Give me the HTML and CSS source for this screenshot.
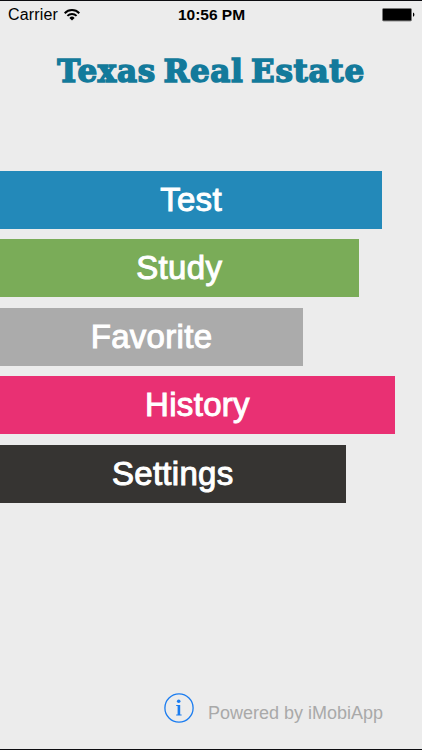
FILE: index.html
```html
<!DOCTYPE html>
<html lang="en">
<head>
    <meta charset="UTF-8">
    <meta name="viewport" content="width=device-width, initial-scale=1.0">
    <title>Texas Real Estate</title>
    <link rel="stylesheet" href="styles.css">
</head>
<body>
    <div class="screen">
        <div class="status-bar">
            <div class="carrier">
                <span>Carrier</span>
                <svg class="wifi" viewBox="0 0 16 12" width="16" height="12">
                    <path d="M0.7 4.2A10.2 10.2 0 0 1 15.3 4.2" fill="none" stroke="#000" stroke-width="2"/>
                    <path d="M3.4 6.9A6.5 6.5 0 0 1 12.6 6.9" fill="none" stroke="#000" stroke-width="1.9"/>
                    <path d="M5.4 8.9A3.7 3.7 0 0 1 10.6 8.9L8 11.5Z" fill="#000"/>
                </svg>
            </div>
            <span class="clock">10:56 PM</span>
            <svg class="battery" viewBox="0 0 33 14" width="33" height="14">
                <rect x="0.5" y="0.5" width="29" height="12.4" rx="1.2" fill="#000" stroke="#777"/>
                <path d="M31 4.6Q32.4 5.2 32.4 6.7T31 8.8Z" fill="#000"/>
            </svg>
        </div>

        <h1 class="title">Texas Real Estate</h1>

        <nav class="menu">
            <a class="menu-item test">Test</a>
            <a class="menu-item study">Study</a>
            <a class="menu-item favorite">Favorite</a>
            <a class="menu-item history">History</a>
            <a class="menu-item settings">Settings</a>
        </nav>

        <footer class="footer">
            <svg class="info" viewBox="0 0 30 30" width="30" height="30">
                <circle cx="15" cy="15" r="14.1" fill="none" stroke="#1a7cf0" stroke-width="1.3"/>
                <circle cx="14.7" cy="8.2" r="1.8" fill="#1a7cf0"/>
                <path d="M12.2 11.9H16.2V21.5H17.6V22.6H12.2V21.5H13.6V13H12.2Z" fill="#1a7cf0"/>
            </svg>
            <span class="powered">Powered by iMobiApp</span>
        </footer>
    </div>
</body>
</html>
```
FILE: styles.css
```css
* {
    margin: 0;
    padding: 0;
    box-sizing: border-box;
}

body {
    background-color: #ececec;
    font-family: "Liberation Sans", Arial, sans-serif;
}

.screen {
    display: flex;
    flex-direction: column;
    height: 750px;
    border-top: 1px solid #0c0c10;
    border-bottom: 1px solid #0c0c10;
    overflow: hidden;
}

.status-bar {
    display: grid;
    grid-template-columns: 1fr auto 1fr;
    align-items: center;
    height: 27px;
    padding: 0 7px 0 8px;
    font-size: 16px;
    color: #000000;
}

.carrier {
    display: flex;
    align-items: center;
    gap: 6px;
    letter-spacing: 0.15px;
}

.clock {
    font-size: 15.5px;
    font-weight: 700;
}

.battery {
    justify-self: end;
}

.title {
    height: 143px;
    padding-top: 23px;
    color: #137a9b;
    font-family: "DejaVu Serif", serif;
    font-size: 31px;
    font-weight: 700;
    letter-spacing: 0.7px;
    line-height: 40px;
    text-align: center;
    white-space: nowrap;
    word-spacing: -4px;
    -webkit-text-stroke: 1.5px #137a9b;
}

.menu {
    display: flex;
    flex-direction: column;
    gap: 10.7px;
}

.menu-item {
    height: 57.8px;
    color: #ffffff;
    font-size: 33px;
    letter-spacing: 0.3px;
    line-height: 58px;
    text-align: center;
    -webkit-text-stroke: 1px #ffffff;
}

.test {
    width: 382px;
    background-color: #2389b9;
}

.study {
    width: 358.5px;
    background-color: #7aac58;
}

.favorite {
    width: 303px;
    background-color: #ababab;
}

.history {
    width: 395px;
    background-color: #e93073;
}

.settings {
    width: 345.5px;
    background-color: #363432;
}

.footer {
    display: flex;
    align-items: center;
    gap: 14px;
    margin-top: auto;
    padding: 0 0 25px 164px;
}

.powered {
    padding-top: 10px;
    color: #a9a9a9;
    font-size: 18px;
    line-height: 22px;
}
```
